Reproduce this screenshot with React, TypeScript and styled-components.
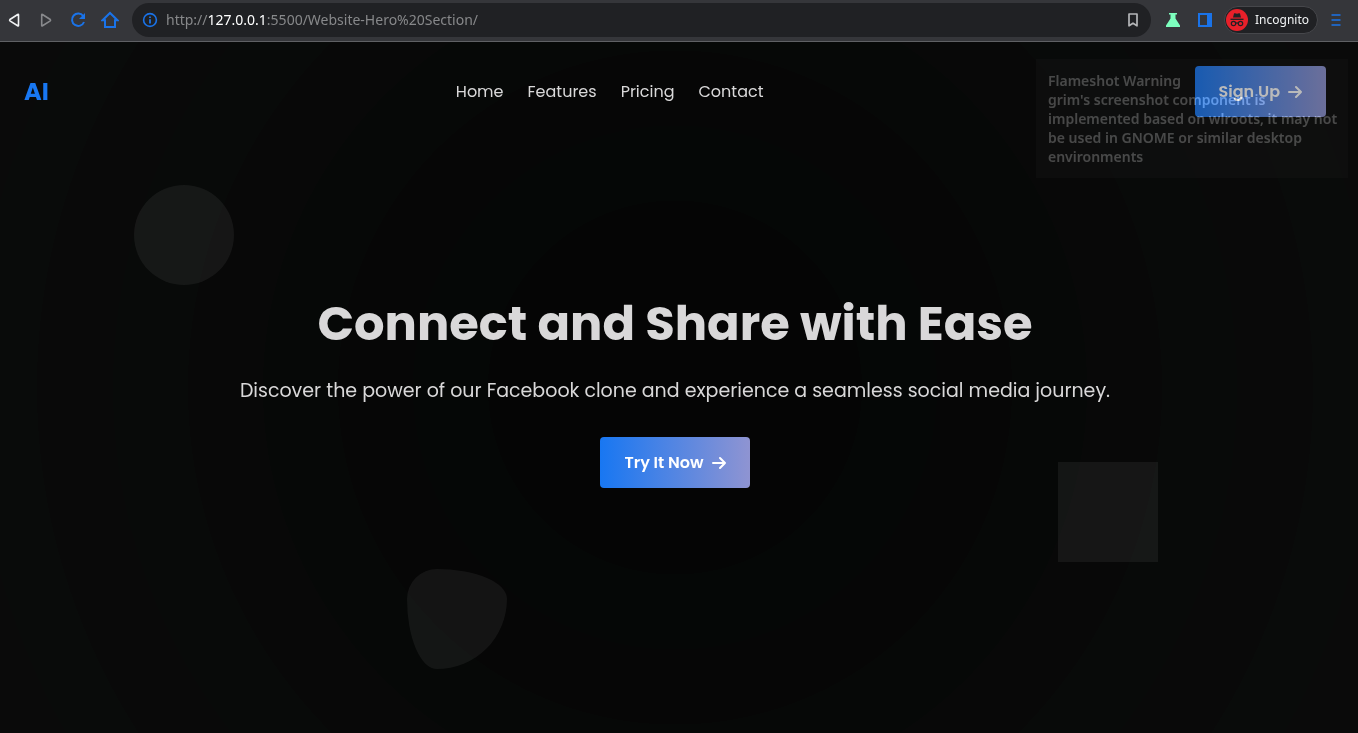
import React from 'react';
import styled, { createGlobalStyle } from 'styled-components';

const Global = createGlobalStyle`
  *, *::before, *::after { box-sizing: border-box; }
  html, body, #root { height: 100%; margin: 0; }
  body { background: #070808; overflow: hidden; }
  button, input { font: inherit; border: 0; padding: 0; margin: 0; background: none; color: inherit; }
  a { color: inherit; text-decoration: none; }
`;

const Window = styled.div`
  min-height: 100%;
  display: flex;
  flex-direction: column;
  position: relative;
`;

const Toolbar = styled.header`
  display: flex;
  align-items: center;
  height: 42px;
  padding: 0 6px 2px 0;
  background: #35363a;
  border-bottom: 1px solid #5f6064;
  font: 14px/20px "Noto Sans", sans-serif;
`;

const IconButton = styled.button<{ $tone?: string }>`
  display: flex;
  align-items: center;
  justify-content: center;
  width: 32px;
  height: 32px;
  flex: none;
  color: ${p => p.$tone || '#1a73e8'};
`;

const NavButtons = styled.div`
  display: flex;
  width: 132px;
  flex: none;
  margin-left: -2px;
`;

const AddressBar = styled.div`
  display: flex;
  align-items: center;
  flex: 1;
  height: 34px;
  padding-left: 10px;
  padding-right: 2px;
  margin-left: 2px;
  margin-right: 6px;
  border-radius: 17px;
  background: #202124;
  color: #87888a;
`;

const Url = styled.span`
  flex: 1;
  margin-left: 8px;
  b { font-weight: 400; color: #fff; }
`;

const Profile = styled.button`
  display: flex;
  align-items: center;
  gap: 7px;
  height: 28px;
  padding: 0 8px 0 1px;
  margin: 0 2px 0 3px;
  border: 1px solid #46474b;
  border-radius: 14px;
  background: #202124;
  color: #f1f3f4;
  font-size: 12px;
`;

const Page = styled.main`
  flex: 1;
  display: flex;
  flex-direction: column;
  position: relative;
  padding-right: 8px;
  color: #d9d8d9;
  font-family: Poppins, Inter, sans-serif;
  background: radial-gradient(circle at calc(50% - 4px) 50%,
    #050505 0 187px, #050706 187px 262px, #060606 262px 337px, #060807 337px 412px,
    #080808 412px 487px, #080a09 487px 562px, #090909 562px 638px, #090b0a 638px 700px, #0a0a0a 700px);
`;

const SiteNav = styled.nav`
  display: flex;
  justify-content: space-between;
  align-items: center;
  padding: 24px;
`;

const Logo = styled.a`
  && { color: #1877f2; }
  font: 700 24px/36px Poppins, Inter, sans-serif;
`;

const Links = styled.div`
  display: flex;
  gap: 24px;
  margin-right: 24px;
  font-size: 16px;
  line-height: 24px;
`;

const CallToAction = styled.button`
  && {
    display: flex;
    align-items: center;
    gap: 8px;
    height: 51px;
    padding: 0 24px;
    border-radius: 4px;
    background: linear-gradient(90deg, #1877f2, #8f94d2);
    color: #fff;
    font-size: 16px;
    line-height: 24px;
    font-weight: 600;
  }
`;

const Hero = styled.section`
  flex: 1;
  display: flex;
  flex-direction: column;
  align-items: center;
  justify-content: center;
  text-align: center;
  padding-bottom: 90px;
`;

const Title = styled.h1`
  margin: 0 0 24px;
  font-size: 48px;
  font-weight: 700;
  line-height: 56px;
`;

const Lead = styled.p`
  margin: 0 0 32px;
  font-size: 19px;
  line-height: 29px;
`;

const Shape = styled.div<{ $left: string; $top: string; $radius: string }>`
  position: absolute;
  left: ${p => p.$left};
  top: ${p => p.$top};
  width: 100px;
  height: 100px;
  border-radius: ${p => p.$radius};
  background: rgba(255, 255, 255, 0.06);
`;

const Toast = styled.aside`
  position: absolute;
  top: 59px;
  right: 10px;
  width: 312px;
  padding: 12px 8px 12px 12px;
  background: rgba(26, 26, 26, 0.3);
  color: rgba(255, 255, 255, 0.23);
  font: 600 14px/19px "Noto Sans", sans-serif;
  pointer-events: none;
  p { margin: 0; mix-blend-mode: plus-lighter; }
`;

const Arrow = () => (
  <svg width="14" height="14" viewBox="0 0 14 14" fill="none" stroke="currentColor" strokeWidth="2" strokeLinecap="round" strokeLinejoin="round" aria-hidden="true">
    <path d="M1 7h12M8 2l5 5-5 5" />
  </svg>
);

const Triangle = ({ flip }: { flip?: boolean }) => (
  <svg width="16" height="16" viewBox="0 0 16 16" fill="none" stroke="currentColor" strokeWidth="1.6" strokeLinejoin="round" aria-hidden="true">
    <path d={flip ? 'M3.7 2.7v10.8q0 .8.8.3l7.8-5q.6-.7 0-1.3l-7.8-5q-.8-.5-.8.2z' : 'M12.5 2.7v10.8q0 .8-.8.3l-7.8-5q-.6-.7 0-1.3l7.8-5q.8-.5.8.2z'} />
  </svg>
);

export default function App() {
  return (
    <Window>
      <Global />
      <Toolbar>
        <NavButtons>
          <IconButton aria-label="Back" $tone="#f1f3f4"><Triangle /></IconButton>
          <IconButton aria-label="Forward" $tone="#88898c"><Triangle flip /></IconButton>
          <IconButton aria-label="Reload">
            <svg width="16" height="16" viewBox="0 0 16 16" fill="none" stroke="currentColor" strokeWidth="2">
              <path d="M13.2 4A6.2 6.2 0 1 0 14 10" />
              <path d="M15 1v6H9z" fill="currentColor" stroke="none" />
            </svg>
          </IconButton>
          <IconButton aria-label="Home">
            <svg width="18" height="18" viewBox="0 0 18 18" fill="none" stroke="currentColor" strokeWidth="2">
              <path d="M1.5 9.2H4V16h10V9.2h2.5L9 2z" />
            </svg>
          </IconButton>
        </NavButtons>
        <AddressBar>
          <svg width="16" height="16" viewBox="0 0 16 16" fill="none" stroke="#1a73e8" strokeWidth="1.6">
            <circle cx="8" cy="8" r="6.4" />
            <path d="M8 7.2v4.2M8 4.4V6" strokeWidth="1.8" />
          </svg>
          <Url>http://<b>127.0.0.1</b>:5500/Website-Hero%20Section/</Url>
          <IconButton aria-label="Bookmark" $tone="#b4b5b8">
            <svg width="16" height="16" viewBox="0 0 16 16" fill="none" stroke="currentColor" strokeWidth="1.7">
              <path d="M4 2h8v11.8l-4-2.6-4 2.6z" strokeLinejoin="round" />
            </svg>
          </IconButton>
        </AddressBar>
        <IconButton aria-label="Experiments" $tone="#7dffbe">
          <svg width="16" height="16" viewBox="0 0 16 16" fill="currentColor">
            <path d="M4 1h8v1.500h-1.500v4L15 13.500V15H1v-1.500l4.500-7v-4H4z" />
          </svg>
        </IconButton>
        <IconButton aria-label="Side panel">
          <svg width="16" height="16" viewBox="0 0 16 16" fill="currentColor" fillRule="evenodd">
            <path d="M1 1h14v14H1zM3 3v10h7V3z" />
          </svg>
        </IconButton>
        <Profile>
          <svg width="22" height="22" viewBox="0 0 22 22">
            <circle cx="11" cy="11" r="11" fill="#e8202a" />
            <path d="M7 8.5 8 4.5Q8.3 4 9 4.2l2 .5 2-.5q.7-.2 1 .3l1 4z" fill="#202124" />
            <path d="M4.500 10.300h13" stroke="#202124" strokeWidth="1.3" />
            <g fill="none" stroke="#202124" strokeWidth="1.2">
              <circle cx="7.5" cy="14.5" r="2.2" />
              <circle cx="14.5" cy="14.5" r="2.2" />
              <path d="M9.7 14.2q1.3-.8 2.6 0" />
            </g>
          </svg>
          Incognito
        </Profile>
        <IconButton aria-label="Menu">
          <svg width="16" height="16" viewBox="0 0 16 16" stroke="currentColor" strokeWidth="1.6">
            <path d="M3.500 3h9M3.500 8h9M3.500 13h9" />
          </svg>
        </IconButton>
      </Toolbar>
      <Page>
        <Shape $left="134px" $top="143px" $radius="50%" />
        <Shape $left="calc(100% - 300px)" $top="420px" $radius="0" />
        <Shape $left="30%" $top="527px" $radius="30% 70% 70% 30% / 30% 30% 70% 70%" />
        <SiteNav>
          <Logo href="#">AI</Logo>
          <Links>
            <a href="#home">Home</a>
            <a href="#features">Features</a>
            <a href="#pricing">Pricing</a>
            <a href="#contact">Contact</a>
          </Links>
          <CallToAction>Sign Up <Arrow /></CallToAction>
        </SiteNav>
        <Hero>
          <Title>Connect and Share with Ease</Title>
          <Lead>Discover the power of our Facebook clone and experience a seamless social media journey.</Lead>
          <CallToAction>Try It Now <Arrow /></CallToAction>
        </Hero>
      </Page>
      <Toast>
        <p>Flameshot Warning</p>
        <p>grim's screenshot component is implemented based on wlroots, it may not be used in GNOME or similar desktop environments</p>
      </Toast>
    </Window>
  );
}
